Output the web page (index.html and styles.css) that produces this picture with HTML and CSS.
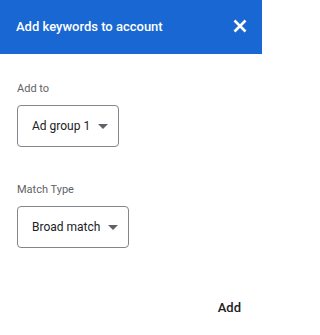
FILE: index.html
```html
<!DOCTYPE html>
<html>
<head>
<meta charset="utf-8">
<link rel="stylesheet" href="styles.css">
</head>
<body>
<div class="dialog">
  <header class="header">
    <span class="title">Add keywords to account</span>
    <button class="close" aria-label="Close">
      <svg width="14" height="14" viewBox="0 0 14 14"><path d="M1.5 1.5L12.5 12.5M12.5 1.5L1.5 12.5" stroke="#fff" stroke-width="2.6" stroke-linecap="butt"/></svg>
    </button>
  </header>
  <main class="content">
    <section class="field">
      <div class="label">Add to</div>
      <div class="select">
        <span class="value">Ad group 1</span>
        <span class="arrow"></span>
      </div>
    </section>
    <section class="field field-second">
      <div class="label">Match Type</div>
      <div class="select">
        <span class="value">Broad match</span>
        <span class="arrow"></span>
      </div>
    </section>
  </main>
  <footer class="footer">
    <button class="add">Add</button>
  </footer>
</div>
</body>
</html>
```
FILE: styles.css
```css
html, body {
  margin: 0;
  padding: 0;
  background: #fff;
}
body {
  font-family: Roboto, "Noto Sans", sans-serif;
  height: 335px;
  overflow: hidden;
}
.dialog {
  display: flex;
  flex-direction: column;
  width: 262px;
  height: 335px;
}
.header {
  background: #1967d2;
  height: 54px;
  display: flex;
  align-items: center;
  justify-content: space-between;
  padding: 0 15px 2px 16px;
  box-sizing: border-box;
}
.title {
  color: #fff;
  font-size: 13px;
  font-weight: 500;
}
.close {
  background: none;
  border: 0;
  padding: 0;
  width: 14px;
  height: 14px;
  display: flex;
  cursor: pointer;
}
.content {
  padding: 28px 17px 0;
  display: flex;
  flex-direction: column;
}
.field {
  display: flex;
  flex-direction: column;
  align-items: flex-start;
}
.field-second {
  margin-top: 36px;
}
.label {
  color: #5f6368;
  font-size: 11px;
  line-height: 14px;
  margin-bottom: 9px;
}
.select {
  border: 1px solid #80868b;
  border-radius: 4px;
  height: 42px;
  box-sizing: border-box;
  display: flex;
  align-items: center;
  padding: 0 10px 0 14px;
  gap: 8px;
}
.value {
  color: #202124;
  font-size: 12px;
}
.arrow {
  width: 0;
  height: 0;
  border-left: 5px solid transparent;
  border-right: 5px solid transparent;
  border-top: 5px solid #5f6368;
}
.footer {
  margin-top: auto;
  display: flex;
  justify-content: flex-end;
  padding: 0 21px 20px 0;
}
.add {
  background: none;
  border: 0;
  padding: 0;
  font-family: Roboto, "Noto Sans", sans-serif;
  font-size: 13px;
  font-weight: 500;
  color: #202124;
}
```
